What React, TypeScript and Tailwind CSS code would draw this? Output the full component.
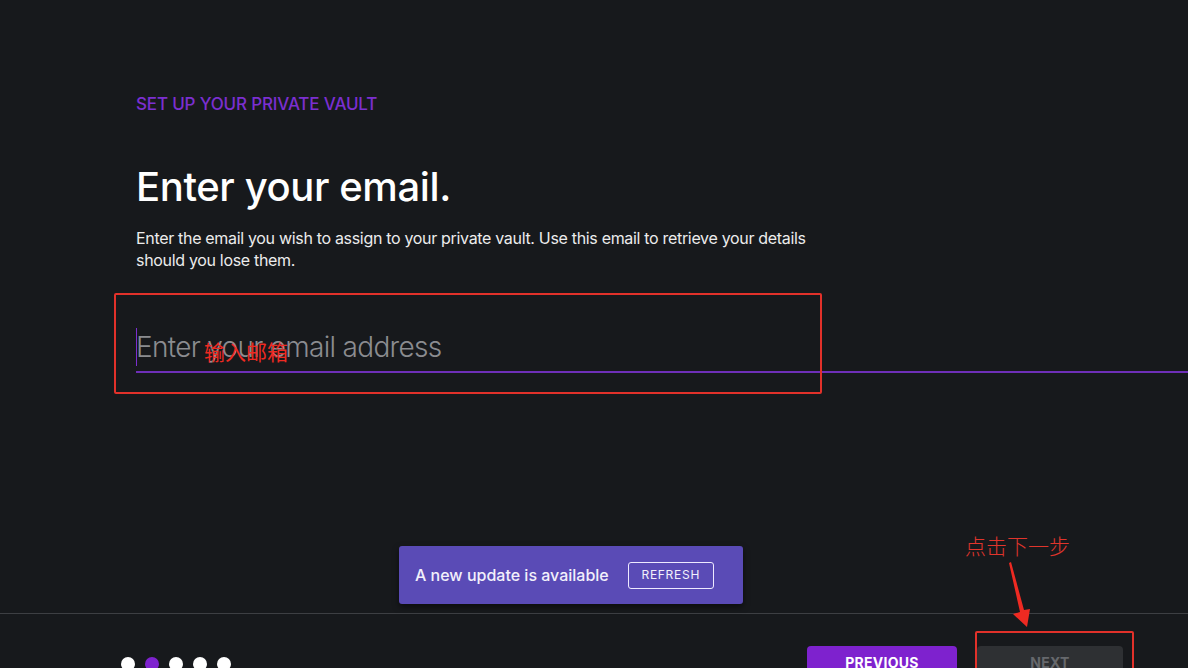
import React from "react";

export default function App() {
  return (
    <div className="relative h-[668px] w-full overflow-hidden bg-[#17191c] font-['Inter','Noto_Sans',sans-serif]">
      <div className="pl-[136px] pt-[94px]">
        <p className="text-[17px] leading-[20px] tracking-[-0.01em] text-[#7b2fd0] font-medium">
          SET UP YOUR PRIVATE VAULT
        </p>
        <h1 className="mt-[49px] text-[40px] leading-[48px] font-medium tracking-[-0.01em] text-white">
          Enter your email.
        </h1>
        <p className="mt-[16px] w-[690px] text-[16px] leading-[22px] tracking-[-0.02em] text-[#ececec]">
          Enter the email you wish to assign to your private vault. Use this email to retrieve your details should you lose them.
        </p>
        <div className="relative mt-[57px] border-b-2 border-[#6e2fb8] pb-[5px]">
          <input
            readOnly
            placeholder="Enter your email address"
            className="block h-[38px] w-full bg-transparent text-[28px] leading-[38px] font-light tracking-[-0.025em] text-white outline-none placeholder:text-[#8b8c90]"
          />
          <div className="absolute left-0 top-0 h-[38px] w-px bg-[#7b2fd0]" />
        </div>
      </div>

      {/* footer */}
      <div className="absolute left-0 right-0 top-[613px] border-t border-[#3d3f43]">
        <div className="flex items-start justify-between pl-[121px] pr-[65px]">
          <div className="mt-[43px] flex gap-[10px]">
            <span className="h-[14px] w-[14px] rounded-full bg-white" />
            <span className="h-[14px] w-[14px] rounded-full bg-[#7e22ce]" />
            <span className="h-[14px] w-[14px] rounded-full bg-white" />
            <span className="h-[14px] w-[14px] rounded-full bg-white" />
            <span className="h-[14px] w-[14px] rounded-full bg-white" />
          </div>
          <div className="mt-[32px] flex gap-[20px]">
            <div className="flex h-[40px] w-[150px] items-start justify-center rounded-[4px] bg-[#7e22ce] pt-[7px] text-[14px] font-bold leading-[20px] tracking-[0.02em] text-white">
              PREVIOUS
            </div>
            <div className="flex h-[40px] w-[146px] items-start justify-center rounded-[4px] bg-[#2e3033] pt-[7px] text-[14px] font-bold leading-[20px] tracking-[0.02em] text-[#66686c]">
              NEXT
            </div>
          </div>
        </div>
      </div>

      {/* toast */}
      <div className="absolute left-[399px] top-[546px] flex h-[58px] w-[344px] items-center rounded-[3px] bg-[#5a4bb6] pl-[16px] shadow-[0_3px_6px_rgba(0,0,0,0.5)]">
        <span className="text-[16px] font-medium text-[#f2f0fb]">
          A new update is available
        </span>
        <span className="ml-[19px] flex h-[27px] w-[86px] items-center justify-center rounded-[3px] border border-[#eeeaff] text-[12px] tracking-[0.06em] text-[#f2f0fb]">
          REFRESH
        </span>
      </div>

      {/* annotations */}
      <div className="pointer-events-none absolute left-[114px] top-[293px] h-[101px] w-[708px] rounded-[2px] border-2 border-[#e2312a]" />
      <span className="pointer-events-none absolute left-[204px] top-[337px] font-['Noto_Sans_CJK_SC',sans-serif] text-[21px] leading-[28px] text-[#ee2a22]">
        输入邮箱
      </span>
      <span className="pointer-events-none absolute left-[965px] top-[531px] font-['Noto_Sans_CJK_SC',sans-serif] text-[21px] font-light leading-[28px] text-[#e0352c]">
        点击下一步
      </span>
      <svg className="pointer-events-none absolute left-[1000px] top-[558px]" width="40" height="75" viewBox="0 0 40 75">
        <polygon points="9,5 11,4 24,52 30,51 27,69 13,56 20,54" fill="#ee2a22" />
      </svg>
      <div className="pointer-events-none absolute left-[975px] top-[631px] h-[50px] w-[159px] rounded-[2px] border-2 border-[#e2312a]" />
    </div>
  );
}
